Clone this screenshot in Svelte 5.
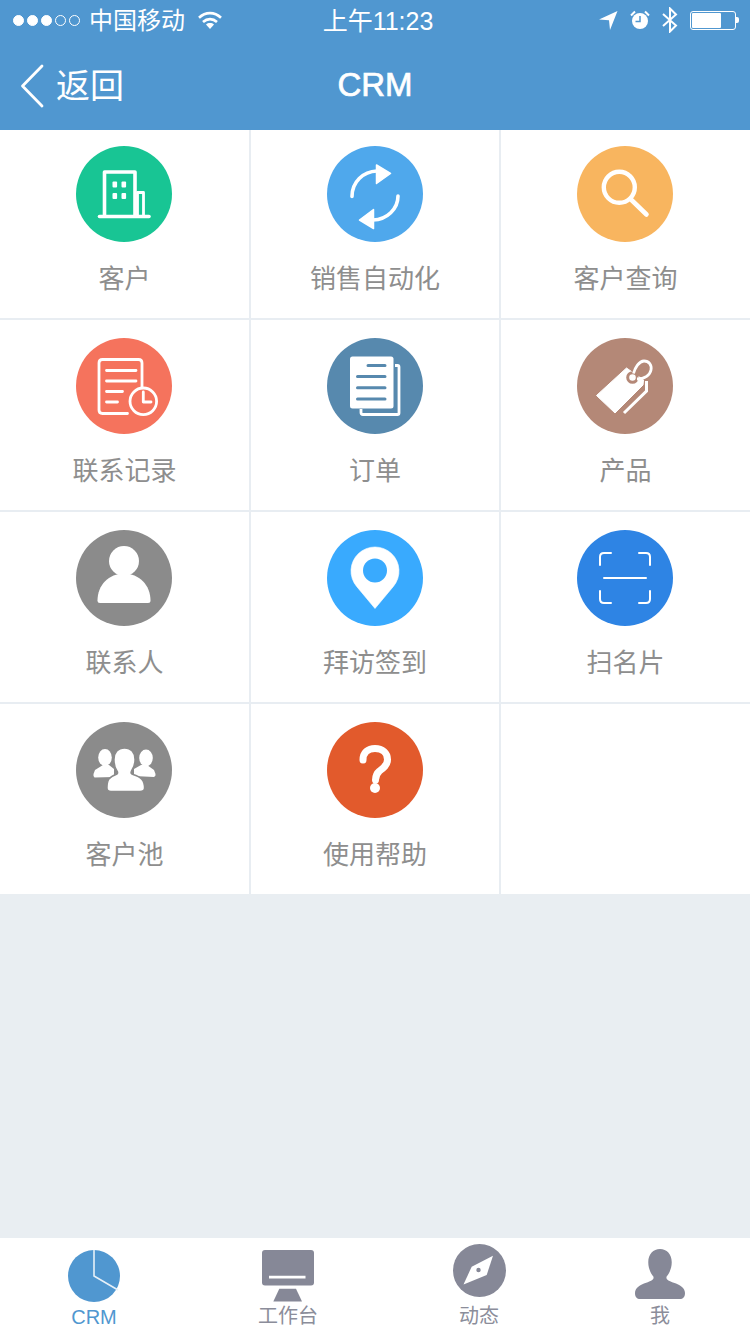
<script>
  const items = [
    { label: '客户', color: '#18c594', icon: building },
    { label: '销售自动化', color: '#4fa8ec', icon: sync },
    { label: '客户查询', color: '#f8b55f', icon: search },
    { label: '联系记录', color: '#f5735d', icon: record },
    { label: '订单', color: '#5789ae', icon: orders },
    { label: '产品', color: '#b48877', icon: tag },
    { label: '联系人', color: '#8b8b8b', icon: person },
    { label: '拜访签到', color: '#39aafe', icon: pin },
    { label: '扫名片', color: '#2e84e4', icon: scan },
    { label: '客户池', color: '#8b8b8b', icon: group },
    { label: '使用帮助', color: '#e25a2c', icon: help },
  ];
</script>

{#snippet building()}
  <g fill="none" stroke="#fff" stroke-width="3.6" stroke-linejoin="round" stroke-linecap="round">
    <path d="M28.5 69V26H59V69" />
    <path d="M61.5 69V46.5H67.5V69" stroke-width="2.8" />
    <path d="M23.5 70.5H73" />
  </g>
  <g fill="#fff">
    <rect x="36.5" y="35.5" width="4.6" height="6" rx="1" />
    <rect x="45.5" y="35.5" width="4.6" height="6" rx="1" />
    <rect x="36.5" y="47" width="4.6" height="6" rx="1" />
    <rect x="45.5" y="47" width="4.6" height="6" rx="1" />
  </g>
{/snippet}

{#snippet sync()}
  <g fill="none" stroke="#fff" stroke-width="3.6" stroke-linecap="round">
    <path d="M25 50.5C25 36 36 25.5 50 25" />
    <path d="M71 50C71 63 60 73.5 46 74" />
  </g>
  <g fill="#fff" stroke="#fff" stroke-width="1.5" stroke-linejoin="round">
    <path d="M49.5 19L63.5 27.5L49.5 37.5Z" />
    <path d="M46.5 63.5L32.5 74L46.5 82.5Z" />
  </g>
{/snippet}

{#snippet search()}
  <g fill="none" stroke="#fff" stroke-linecap="round">
    <circle cx="42.3" cy="41.3" r="15.5" stroke-width="4.4" />
    <path d="M54.5 54L69.5 68.5" stroke-width="4.6" />
  </g>
{/snippet}

{#snippet record()}
  <g fill="none" stroke="#fff" stroke-width="2.8" stroke-linecap="round" stroke-linejoin="round">
    <path d="M51.5 75.5H26.5Q23 75.5 23 72V25Q23 21.5 26.5 21.5H62.5Q66 21.5 66 25V49" />
    <path d="M30.5 32.5H60M30.5 43H60M30.5 53.5H46.5M30.5 64H41.5" />
    <circle cx="67.3" cy="63.3" r="13.3" />
    <path d="M67.3 54V64H75" />
  </g>
{/snippet}

{#snippet orders(color)}
  <path d="M68 27.5H70.5Q72 27.5 72 29V75Q72 76.5 70.5 76.5H36Q34 76.5 34 74.5V71" fill="none" stroke="#fff" stroke-width="2.8" />
  <rect x="23" y="18.5" width="43.5" height="52" rx="2.5" fill="#fff" />
  <path d="M41 27.5H58M30.5 38.5H58M30.5 49.7H58M30.5 61H58" stroke={color} stroke-width="3" stroke-linecap="round" />
{/snippet}

{#snippet tag(color)}
  <path d="M19.5 57.5L49.5 30L66.5 42L66 47L38 75Z" fill="#fff" stroke="#fff" stroke-linejoin="round" />
  <circle cx="55.5" cy="39.5" r="4.8" fill="none" stroke={color} stroke-width="3" />
  <path d="M56.5 35.5C58 30 62 23 67 23C72 23 75 27 74 32C73 37 68 41 60 41" fill="none" stroke="#fff" stroke-width="2.8" />
  <path d="M47 75L69.5 53V43" fill="none" stroke="#fff" stroke-width="3" />
{/snippet}

{#snippet person()}
  <circle cx="48" cy="31" r="15" fill="#fff" />
  <path d="M21.5 70.5C21.5 55 33 43.5 48 43.5C63 43.5 74.5 55 74.5 70.5Q74.5 73 72 73H24Q21.5 73 21.5 70.5Z" fill="#fff" />
{/snippet}

{#snippet pin(color)}
  <path d="M48 78.5L29.6 56.4A24 24 0 1 1 66.4 56.4Z" fill="#fff" stroke="#fff" stroke-width="0.6" stroke-linejoin="round" />
  <circle cx="48" cy="40.5" r="12" fill={color} />
{/snippet}

{#snippet scan()}
  <g fill="none" stroke="#fff" stroke-width="2" stroke-linecap="round">
    <path d="M23 35V27Q23 23 27 23H34" />
    <path d="M62 23H69Q73 23 73 27V35" />
    <path d="M23 61V69Q23 73 27 73H34" />
    <path d="M62 73H69Q73 73 73 69V61" />
    <path d="M27 48H69" />
  </g>
{/snippet}

{#snippet group(color)}
  <g fill="#fff">
    <ellipse cx="29" cy="35.5" rx="6.8" ry="8.5" />
    <path d="M17.5 52L19 48L27 43H33L38 47V55L18.5 55.5Q17 54.5 17.5 52Z" />
    <ellipse cx="70" cy="36" rx="6.8" ry="8.5" />
    <path d="M79.5 52L78 48L71 43H65L58 47V54L78 55Q80 54 79.5 52Z" />
  </g>
  <g fill="#fff" stroke={color} stroke-width="1.4">
    <path d="M31 66C31 58 33 55 40 52.5C42 52 42 50.5 41 49C39 46 38 42 38 37.5C38 30.5 42 26 48.5 26C55 26 59 30.5 59 37.5C59 42 57.5 46 55.5 49C54.5 51 55 52 57 52.5C65 55 68.5 58 68.5 66Q68.5 69.5 64 69.5H35Q31 69.5 31 66Z" />
  </g>
{/snippet}

{#snippet help()}
  <path d="M36 38C36 30.5 41 26.5 48 26.5C55.5 26.5 60.5 31 60.5 37.5C60.5 43.5 56 46.5 52.5 49C49.5 51.5 48.5 54 48.5 58" fill="none" stroke="#fff" stroke-width="7" stroke-linecap="round" />
  <circle cx="48" cy="66" r="5" fill="#fff" />
{/snippet}

<div class="page">
  <header class="top">
    <div class="status">
      <div class="carrier">
        <span class="dots">
          <i class="dot on"></i><i class="dot on"></i><i class="dot on"></i><i class="dot"></i><i class="dot"></i>
        </span>
        <span class="carrier-name">中国移动</span>
        <svg class="wifi" width="24" height="19" viewBox="0 0 24 19">
          <g fill="none" stroke="#fff" stroke-width="2.6">
            <path d="M1 6.8C7.5 0.6 16.5 0.6 23 6.8" />
            <path d="M5 11C9.2 7.2 14.8 7.2 19 11" />
          </g>
          <path d="M8 13.4C10.3 11.6 13.7 11.6 16 13.4L12 18Z" fill="#fff" />
        </svg>
      </div>
      <div class="time">上午11:23</div>
      <div class="indicators">
        <svg width="19" height="19" viewBox="0 0 19 19">
          <path d="M18.5 0L0 8.5L10 9.2L11 19Z" fill="#fff" />
        </svg>
        <svg width="20" height="20" viewBox="0 0 20 20">
          <circle cx="10" cy="11" r="8" fill="#fff" />
          <path d="M10 6V11.5H5.5" fill="none" stroke="#5097d0" stroke-width="1.5" />
          <path d="M1 5.5L5 1.5M19 5.5L15 1.5" stroke="#fff" stroke-width="2" />
        </svg>
        <svg width="16" height="26" viewBox="0 0 16 26">
          <path d="M1 7L14 18.5L8 24.5V1.5L14 7.5L1 19" fill="none" stroke="#fff" stroke-width="2" />
        </svg>
        <div class="battery">
          <div class="battery-shell"><div class="battery-level" style="width: 70%"></div></div>
          <div class="battery-nub"></div>
        </div>
      </div>
    </div>
    <nav class="nav">
      <div class="back">
        <svg width="24" height="44" viewBox="0 0 24 44">
          <path d="M22 2L2.5 22L22 42" fill="none" stroke="#fff" stroke-width="2.8" stroke-linecap="round" stroke-linejoin="round" />
        </svg>
        <span>返回</span>
      </div>
      <h1>CRM</h1>
    </nav>
  </header>

  <main class="grid">
    {#each items as item}
      <div class="cell">
        <svg class="badge" width="96" height="96" viewBox="0 0 96 96">
          <circle cx="48" cy="48" r="48" fill={item.color} />
          {@render item.icon(item.color)}
        </svg>
        <div class="label">{item.label}</div>
      </div>
    {/each}
    <div class="cell"></div>
  </main>

  <div class="spacer"></div>

  <footer class="tabs">
    <div class="tab active">
      <svg class="tab-crm" width="52" height="52" viewBox="0 0 52 52">
        <circle cx="26" cy="26" r="26" fill="#5097d0" />
        <path d="M26 0V26L50 40" fill="none" stroke="#e6f0f8" stroke-width="1.6" />
      </svg>
      <span class="crm-label">CRM</span>
    </div>
    <div class="tab">
      <svg class="tab-work" width="52" height="52" viewBox="0 0 52 52">
        <rect width="52" height="35.5" rx="3" fill="#868897" />
        <path d="M7 27.2H43.5" stroke="#fff" stroke-width="2.8" />
        <path d="M17.3 38.8H34L40 51.5H11.3Z" fill="#868897" />
      </svg>
      <span>工作台</span>
    </div>
    <div class="tab">
      <svg class="tab-compass" width="53" height="53" viewBox="0 0 53 53">
        <circle cx="26.5" cy="26.5" r="26.5" fill="#868897" />
        <path d="M40 11.7L33.7 31L10.5 40.5L18.7 22.7Z" fill="#fff" />
        <circle cx="25.5" cy="26" r="2.2" fill="#868897" />
      </svg>
      <span>动态</span>
    </div>
    <div class="tab">
      <svg class="tab-me" width="50" height="50" viewBox="0 0 49 49">
        <path d="M24.5 0C31 0 36 5 36 13C36 19 33.5 24 31 27C30 30 33 31 38 33C44 35 49 38 49 43C49 47 47 49 44 49H5C2 49 0 47 0 43C0 38 5 35 11 33C16 31 19 30 18 27C15.5 24 13 19 13 13C13 5 18 0 24.5 0Z" fill="#868897" />
      </svg>
      <span>我</span>
    </div>
  </footer>
</div>

<style>
  :global(body) {
    margin: 0;
    background: #e9eef2;
  }

  .page {
    width: 750px;
    height: 1334px;
    display: flex;
    flex-direction: column;
    font-family: "Liberation Sans", "Noto Sans CJK SC", sans-serif;
    background: #e9eef2;
    overflow: hidden;
  }

  .top {
    background: #5097d0;
    color: #fff;
    height: 130px;
    flex: none;
  }

  .status {
    height: 40px;
    position: relative;
    display: flex;
    align-items: center;
    justify-content: space-between;
    padding: 0 11px 0 13px;
  }

  .carrier {
    display: flex;
    align-items: center;
  }

  .dots {
    display: flex;
    gap: 3px;
  }

  .dot {
    width: 11px;
    height: 11px;
    box-sizing: border-box;
    border: 1px solid #fff;
    border-radius: 50%;
  }

  .dot.on {
    background: #fff;
  }

  .carrier-name {
    font-size: 24px;
    line-height: 30px;
    margin-left: 9px;
    margin-top: 2px;
  }

  .wifi {
    margin-left: 13px;
  }

  .time {
    position: absolute;
    left: 0;
    right: 0;
    top: 5px;
    text-align: center;
    font-size: 25px;
    line-height: 32px;
    padding-left: 6px;
  }

  .indicators {
    display: flex;
    align-items: center;
    gap: 12px;
  }

  .battery {
    display: flex;
    align-items: center;
  }

  .battery-shell {
    width: 46px;
    height: 19px;
    box-sizing: border-box;
    border: 1px solid #fff;
    border-radius: 3px;
    padding: 1px;
  }

  .battery-level {
    height: 100%;
    background: #fff;
    border-radius: 1px;
  }

  .battery-nub {
    width: 3px;
    height: 6px;
    background: #fff;
    border-radius: 0 2px 2px 0;
  }

  .nav {
    height: 90px;
    position: relative;
    display: flex;
    align-items: center;
    justify-content: center;
  }

  .back {
    position: absolute;
    left: 20px;
    top: 24px;
    display: flex;
    align-items: center;
    gap: 12px;
    font-size: 34px;
    line-height: 44px;
  }

  .nav h1 {
    margin: 0;
    font-size: 33px;
    font-weight: 400;
    -webkit-text-stroke: 0.7px #fff;
  }

  .grid {
    display: grid;
    grid-template-columns: 249px 248px 249px;
    grid-template-rows: 188px repeat(3, 190px);
    gap: 2px;
    background: #e8edf2;
  }

  .cell {
    background: #fff;
    display: flex;
    flex-direction: column;
    align-items: center;
    padding-top: 18px;
  }

  .cell:nth-child(-n + 3) {
    padding-top: 16px;
  }

  .cell:nth-child(3n + 1) .badge,
  .cell:nth-child(3n) .badge {
    margin-right: 1px;
  }

  .badge {
    display: block;
  }

  .label {
    margin-top: 21px;
    font-size: 26px;
    line-height: 32px;
    color: #8e8e8e;
  }

  .spacer {
    flex: 1;
  }

  .tabs {
    height: 96px;
    flex: none;
    background: #fff;
    display: grid;
    grid-template-columns: 188px 200px 182px 180px;
  }

  .tab {
    display: flex;
    flex-direction: column;
    align-items: center;
    font-size: 20px;
    line-height: 24px;
    color: #8b8d9a;
  }

  .tab svg {
    display: block;
  }

  .tab-crm {
    margin-top: 12px;
  }

  .tab-work {
    margin-top: 12px;
    margin-bottom: 2px;
  }

  .tab-compass {
    margin-top: 6px;
    margin-bottom: 7px;
  }

  .tab-me {
    margin-top: 11px;
    margin-bottom: 5px;
  }

  .crm-label {
    color: #5097d0;
    margin-top: 3px;
  }
</style>
